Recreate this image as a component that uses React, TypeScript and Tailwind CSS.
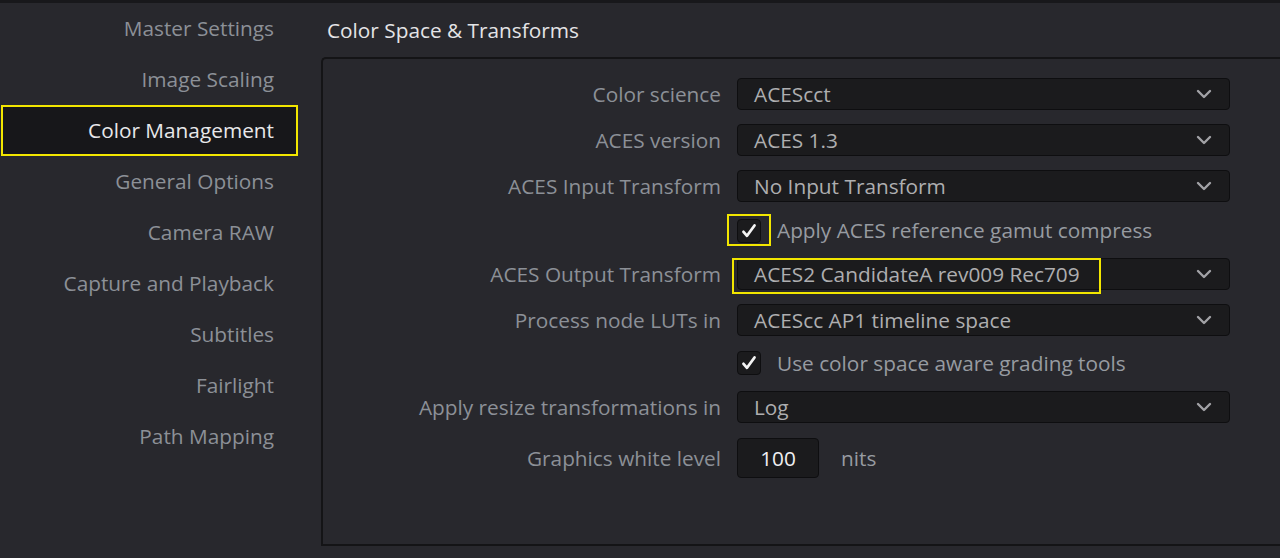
import React from "react";

const font = { fontFamily: '"Open Sans", "Noto Sans", sans-serif' };

const navItems = [
  "Master Settings",
  "Image Scaling",
  "Color Management",
  "General Options",
  "Camera RAW",
  "Capture and Playback",
  "Subtitles",
  "Fairlight",
  "Path Mapping",
];

function Chevron() {
  return (
    <svg width="16" height="10" viewBox="0 0 16 10" fill="none">
      <path d="M2 2 L8 8 L14 2" stroke="#a2a2a6" strokeWidth="2.4" strokeLinecap="round" strokeLinejoin="round" />
    </svg>
  );
}

function Select({ value }: { value: string }) {
  return (
    <div className="flex h-[32px] w-[493px] items-center justify-between rounded-[4px] border border-[#0e0e10] bg-[#1b1b1d] pl-[16px] pr-[17px]">
      <span className="pt-[1px] text-[20.8px] text-[#aeaeb0]">{value}</span>
      <Chevron />
    </div>
  );
}

function Check() {
  return (
    <div className="flex h-[24px] w-[24px] items-center justify-center rounded-[4px] border border-[#0e0e10] bg-[#1b1b1d]">
      <svg width="18" height="18" viewBox="0 0 18 18" fill="none">
        <path d="M3.5 9.8 L7 13.8 L14.5 3.5" stroke="#f4f4f4" strokeWidth="2.8" strokeLinecap="round" strokeLinejoin="round" />
      </svg>
    </div>
  );
}

function Row({ label, children, className = "" }: { label?: string; children: React.ReactNode; className?: string }) {
  return (
    <div className={`flex items-center ${className}`}>
      <div className="w-[398px] pt-[1px] text-right text-[20.8px] text-[#8c9097]">{label}</div>
      <div className="ml-[16px] flex items-center">{children}</div>
    </div>
  );
}

export default function App() {
  return (
    <div className="flex h-[558px] w-[1280px] flex-col overflow-hidden bg-[#28282d]" style={font}>
      <div className="h-[3px] bg-[#18181b]" />
      <div className="flex flex-1">
        {/* Settings navigation */}
        <div className="flex w-[300px] flex-col">
          {navItems.map((item) => {
            const active = item === "Color Management";
            return (
              <div
                key={item}
                className={`ml-[1px] flex h-[51px] w-[297px] items-center justify-end border-2 pr-[22px] pt-[1px] text-[20.8px] ${
                  active
                    ? "border-[#f2e600] bg-[#17171a] text-[#e8e8ea]"
                    : "border-transparent text-[#8c9097]"
                }`}
              >
                {item}
              </div>
            );
          })}
        </div>

        {/* Color space panel */}
        <div className="flex flex-1 flex-col pl-[21px]">
          <div className="flex h-[54px] items-center pl-[6px] pt-[1px] text-[20.8px] text-[#e4e4e6]">
            Color Space &amp; Transforms
          </div>
          <div className="h-[489px] rounded-tl-[5px] border-2 border-r-0 border-[#141416] pt-[19px]">
            <Row label="Color science">
              <Select value="ACEScct" />
            </Row>
            <Row label="ACES version" className="mt-[14px]">
              <Select value="ACES 1.3" />
            </Row>
            <Row label="ACES Input Transform" className="mt-[14px]">
              <Select value="No Input Transform" />
            </Row>
            <Row className="mt-[16px] h-[24px]">
              <div className="relative">
                <Check />
                <div className="absolute left-[-10px] top-[-5px] h-[32px] w-[44px] border-2 border-[#f2e600]" />
              </div>
              <span className="ml-[16px] pt-[1px] text-[20.8px] text-[#979ba1]">Apply ACES reference gamut compress</span>
            </Row>
            <Row label="ACES Output Transform" className="mt-[15px]">
              <div className="relative">
                <Select value="ACES2 CandidateA rev009 Rec709" />
                <div className="absolute left-[-5px] top-0 h-[36px] w-[369px] border-2 border-[#f2e600]" />
              </div>
            </Row>
            <Row label="Process node LUTs in" className="mt-[14px]">
              <Select value="ACEScc AP1 timeline space" />
            </Row>
            <Row className="mt-[15px] h-[24px]">
              <Check />
              <span className="ml-[16px] pt-[1px] text-[20.8px] text-[#979ba1]">Use color space aware grading tools</span>
            </Row>
            <Row label="Apply resize transformations in" className="mt-[16px]">
              <Select value="Log" />
            </Row>
            <Row label="Graphics white level" className="mt-[15px]">
              <div className="flex h-[40px] w-[82px] items-center justify-center rounded-[4px] border border-[#0e0e10] bg-[#1b1b1d] pt-[1px] text-[20.8px] text-[#f0f0f2]">
                100
              </div>
              <span className="ml-[22px] pt-[1px] text-[20.8px] text-[#979ba1]">nits</span>
            </Row>
          </div>
        </div>
      </div>
    </div>
  );
}
